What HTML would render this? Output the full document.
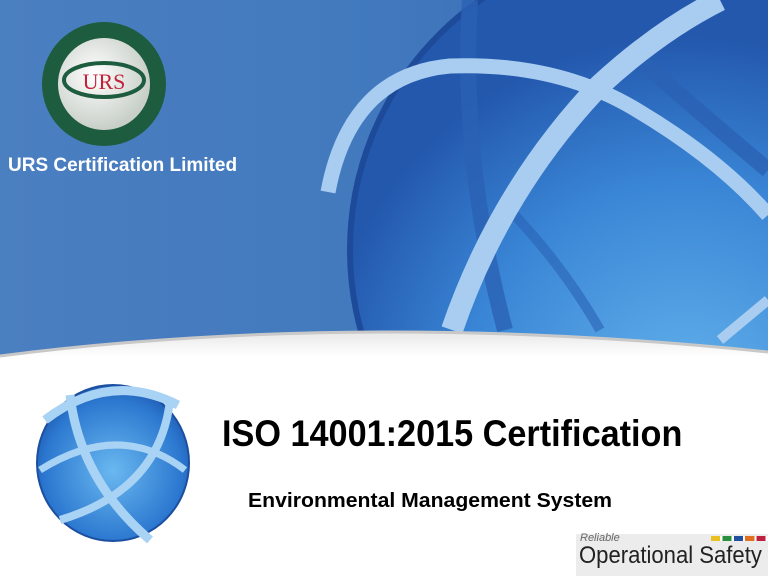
<!DOCTYPE html>
<html><head><style>
body{margin:0;width:768px;height:576px;overflow:hidden;font-family:"Liberation Sans",sans-serif;background:#fff;position:relative}
.t{position:absolute;color:#000;font-weight:bold;white-space:nowrap;transform-origin:0 0}
</style></head><body>
<svg width="768" height="576" style="position:absolute;left:0;top:0">
<defs>
<linearGradient id="bg" x1="0" y1="0" x2="1" y2="0">
<stop offset="0" stop-color="#4a7fc0"/><stop offset="0.5" stop-color="#4279be"/><stop offset="1" stop-color="#2f62ae"/>
</linearGradient>
<radialGradient id="gl" cx="0.55" cy="0.75" r="0.6">
<stop offset="0" stop-color="#64b2ec"/><stop offset="0.6" stop-color="#3a86d6"/><stop offset="1" stop-color="#2358ad"/>
</radialGradient>
<radialGradient id="gs" cx="0.5" cy="0.55" r="0.6">
<stop offset="0" stop-color="#6ab8f0"/><stop offset="0.75" stop-color="#2c78d0"/><stop offset="1" stop-color="#1c52a8"/>
</radialGradient>
<radialGradient id="lg" cx="0.4" cy="0.4" r="0.6">
<stop offset="0" stop-color="#ffffff"/><stop offset="1" stop-color="#c8cfc8"/>
</radialGradient>
<linearGradient id="wh" x1="0" y1="0" x2="0" y2="1"><stop offset="0" stop-color="#e8e8e8"/><stop offset="0.1" stop-color="#fff"/></linearGradient>
</defs>
<rect width="768" height="380" fill="url(#bg)"/>
<circle cx="655" cy="250" r="305" fill="url(#gl)" stroke="#1e4a9a" stroke-width="6"/>
<path d="M470 0 Q460 160 505 330" stroke="#2a62b4" stroke-width="16" fill="none" opacity="0.8"/>
<path d="M640 60 Q720 130 768 170" stroke="#2a62b4" stroke-width="16" fill="none" opacity="0.8"/>
<path d="M500 200 Q560 260 600 330" stroke="#2a62b4" stroke-width="10" fill="none" opacity="0.6"/>
<path d="M328 192 Q350 75 450 66 Q560 62 640 112 Q720 160 768 215" stroke="#a9cdf0" stroke-width="15" fill="none"/>
<path d="M452 330 Q500 190 600 85 Q660 30 720 0" stroke="#a9cdf0" stroke-width="22" fill="none"/>
<path d="M720 340 L768 300" stroke="#a9cdf0" stroke-width="10" fill="none"/>
<path d="M0 356 Q360 310 768 352 L768 576 L0 576 Z" fill="url(#wh)"/>
<path d="M0 356 Q360 310 768 352" stroke="#c8c8c8" stroke-width="3" fill="none"/>
<ellipse cx="113" cy="463" rx="76" ry="78" fill="url(#gs)" stroke="#1c4fa0" stroke-width="2"/>
<path d="M45 420 Q110 370 178 405" stroke="#a9d3f5" stroke-width="9" fill="none"/>
<path d="M40 470 Q120 420 185 470" stroke="#a9d3f5" stroke-width="7" fill="none"/>
<path d="M70 395 Q80 480 150 540" stroke="#a9d3f5" stroke-width="9" fill="none"/>
<path d="M170 400 Q160 490 60 520" stroke="#a9d3f5" stroke-width="8" fill="none"/>
<circle cx="104" cy="84" r="62" fill="#1d5c3e"/>
<circle cx="104" cy="84" r="46" fill="url(#lg)"/>
<ellipse cx="104" cy="80" rx="40" ry="17" fill="none" stroke="#1d5c3e" stroke-width="4"/>
<text x="104" y="89" font-family="Liberation Serif" font-size="22" fill="#c0223a" text-anchor="middle">URS</text>
</svg>
<div class="t" style="left:8px;top:155px;color:#fff;font-size:19px">URS Certification Limited</div>
<div class="t" style="left:222px;top:413px;font-size:37px;transform:scaleX(0.925)">ISO 14001:2015 Certification</div>
<div class="t" style="left:248px;top:490px;font-size:20px;transform:scaleX(1.06)">Environmental Management System</div>
<div style="position:absolute;left:576px;top:534px;width:192px;height:42px;background:#ececec"></div>
<div style="position:absolute;left:580px;top:532px;font-size:11px;font-style:italic;color:#666">Reliable</div>
<div style="position:absolute;left:579px;top:542px;font-size:24px;color:#222;white-space:nowrap;transform:scaleX(0.92);transform-origin:0 0">Operational Safety</div>
<div style="position:absolute;left:711px;top:536px;width:57px;height:5px;background:linear-gradient(90deg,#e8c020 0 16%,#fff 16% 20%,#2a9040 20% 36%,#fff 36% 40%,#2050a0 40% 56%,#fff 56% 60%,#e07020 60% 76%,#fff 76% 80%,#c02040 80% 96%,#fff 96%)"></div>
</body></html>
